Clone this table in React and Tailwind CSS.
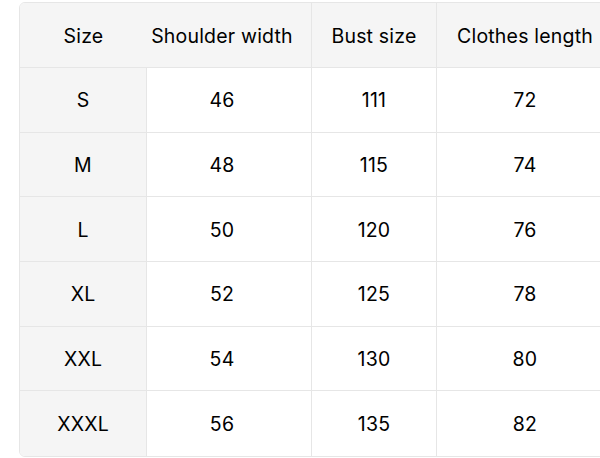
import React from "react";

const headers = ["Size", "Shoulder width", "Bust size", "Clothes length"];

const rows = [
  ["S", "46", "111", "72"],
  ["M", "48", "115", "74"],
  ["L", "50", "120", "76"],
  ["XL", "52", "125", "78"],
  ["XXL", "54", "130", "80"],
  ["XXXL", "56", "135", "82"],
];

function Cell({ children, shaded, right, bottom, head, col }) {
  return (
    <div
      className={`flex items-center justify-center ${
        head ? "h-[65px] pt-[4px]" : "h-[64.67px] pt-[2px]"
      } ${col === 1 ? "pr-[14px]" : ""} text-[19.5px] tracking-[0.01em] text-black ${
        shaded ? "bg-[#f5f5f5]" : "bg-white"
      } ${right ? "border-r border-[#e6e6e6]" : ""} ${
        bottom ? "" : "border-b border-[#e6e6e6]"
      }`}
    >
      {children}
    </div>
  );
}

export default function App() {
  return (
    <div
      className="w-[600px] h-[458px] overflow-hidden bg-white"
      style={{ fontFamily: "Inter, 'Noto Sans', sans-serif" }}
    >
      <div className="ml-[19px] mt-[2px] w-[600px] border border-[#e6e6e6] rounded-[6px] overflow-hidden">
        <div className="grid grid-cols-[127px_165px_125px_176px]">
          {headers.map((h, i) => (
            <Cell key={h} shaded head col={i} right={i === 1 || i === 2}>
              {h}
            </Cell>
          ))}
          {rows.map((r, ri) =>
            r.map((v, ci) => (
              <Cell
                key={ri + "-" + ci}
                col={ci}
                shaded={ci === 0}
                right={ci < 3}
                bottom={ri === rows.length - 1}
              >
                {v}
              </Cell>
            ))
          )}
        </div>
      </div>
    </div>
  );
}
